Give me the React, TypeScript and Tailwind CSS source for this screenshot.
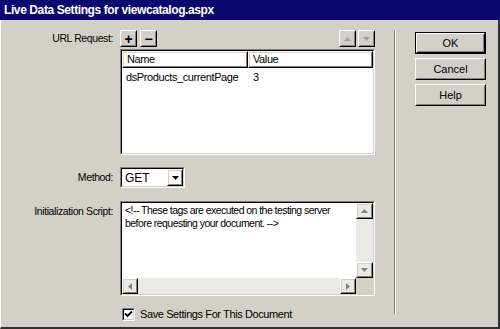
import { ReactNode } from "react";

const face = "font-['Liberation_Sans',Arial,sans-serif]";

// classic raised 3D edge
function Raised({ children, className = "" }: { children?: ReactNode; className?: string }) {
  return (
    <div className={`border border-t-white border-l-white border-b-black border-r-black ${className}`}>
      <div className="flex h-full w-full items-center justify-center border border-t-[#d4d0c8] border-l-[#d4d0c8] border-b-[#808080] border-r-[#808080]">
        {children}
      </div>
    </div>
  );
}

// classic sunken 3D edge
function Sunken({ children, className = "" }: { children?: ReactNode; className?: string }) {
  return (
    <div className={`border border-t-[#808080] border-l-[#808080] border-b-white border-r-white ${className}`}>
      <div className="flex h-full w-full flex-col border border-t-black border-l-black border-b-[#d4d0c8] border-r-[#d4d0c8] bg-white">
        {children}
      </div>
    </div>
  );
}

function Tri({ dir, color = "#808080" }: { dir: "up" | "down" | "left" | "right"; color?: string }) {
  const pts = {
    up: "0,4 7,4 3.5,0",
    down: "0,0 7,0 3.5,4",
    left: "4,0 4,7 0,3.5",
    right: "0,0 0,7 4,3.5",
  }[dir];
  const vertical = dir === "up" || dir === "down";
  return (
    <svg width={vertical ? 7 : 4} height={vertical ? 4 : 7} viewBox={vertical ? "0 0 7 4" : "0 0 4 7"}>
      <polygon points={pts} fill={color} />
    </svg>
  );
}

function DialogButton({ label, isDefault }: { label: string; isDefault?: boolean }) {
  return (
    <div className={`h-[22px] w-[71px] ${isDefault ? "border border-black" : ""}`}>
      <Raised className="h-full w-full">
        <span className="text-[11px] text-black">{label}</span>
      </Raised>
    </div>
  );
}

export default function App() {
  return (
    <div className={`flex h-[329px] w-[500px] flex-col bg-[#d4d0c8] ${face} text-black`}>
      {/* title bar */}
      <div className="flex h-[20px] items-center bg-[#08086e] pl-[4px]">
        <span className="text-[12px] font-bold tracking-[-0.4px] text-white">
          Live Data Settings for viewcatalog.aspx
        </span>
      </div>

      <div className="flex flex-1 border-b-2 border-r-2 border-b-[#303030] border-r-[#303030] border-l border-l-white">
        {/* form */}
        <div className="flex w-[393px] flex-col pt-[10px] text-[10.5px] tracking-[-0.4px]">
          <div className="flex items-center">
            <div className="w-[119px] pr-[7px] text-right">URL Request:</div>
            <div className="flex gap-[3px]">
              <Raised className="h-[17px] w-[17px]">
                <span className="text-[14px] font-bold leading-none">+</span>
              </Raised>
              <Raised className="h-[17px] w-[17px]">
                <span className="text-[14px] font-bold leading-none">−</span>
              </Raised>
            </div>
            <div className="ml-auto mr-[19px] flex gap-[2px]">
              <Raised className="h-[17px] w-[17px]">
                <Tri dir="up" color="#a0a0a0" />
              </Raised>
              <Raised className="h-[17px] w-[17px]">
                <Tri dir="down" color="#a0a0a0" />
              </Raised>
            </div>
          </div>

          <div className="mt-[2px] flex">
            <div className="w-[119px]" />
            <Sunken className="h-[106px] w-[255px]">
              <div className="flex h-[17px] text-[11px]">
                <Raised className="h-full w-[126px]">
                  <span className="w-full pl-[3px]">Name</span>
                </Raised>
                <Raised className="h-full flex-1">
                  <span className="w-full pl-[3px]">Value</span>
                </Raised>
              </div>
              <div className="flex pt-[1px] text-[11px]">
                <div className="w-[126px] pl-[4px]">dsProducts_currentPage</div>
                <div className="pl-[5px]">3</div>
              </div>
            </Sunken>
          </div>

          <div className="mt-[12px] flex items-center">
            <div className="w-[119px] pr-[7px] text-right">Method:</div>
            <Sunken className="h-[21px] w-[65px]">
              <div className="flex h-full items-center">
                <span className="flex-1 pl-[3px] text-[12px] tracking-normal">GET</span>
                <Raised className="h-[17px] w-[16px]">
                  <Tri dir="down" color="#000" />
                </Raised>
              </div>
            </Sunken>
          </div>

          <div className="mt-[13px] flex">
            <div className="w-[119px] pr-[7px] pt-[3px] text-right">Initialization Script:</div>
            <Sunken className="h-[95px] w-[255px]">
              <div className="flex flex-1">
                <div className="flex-1 pl-[3px] pt-[1px] leading-[13px] tracking-[-0.55px]">
                  &lt;!-- These tags are executed on the testing server
                  <br />
                  before requesting your document. --&gt;
                </div>
                <div className="flex w-[17px] flex-col bg-[#ebe9e4]">
                  <Raised className="h-[16px] w-[17px]">
                    <Tri dir="up" />
                  </Raised>
                  <div className="flex-1" />
                  <Raised className="h-[16px] w-[17px]">
                    <Tri dir="down" />
                  </Raised>
                </div>
              </div>
              <div className="flex h-[16px]">
                <div className="flex flex-1 bg-[#ebe9e4]">
                  <Raised className="h-[16px] w-[16px]">
                    <Tri dir="left" />
                  </Raised>
                  <div className="flex-1" />
                  <Raised className="h-[16px] w-[16px]">
                    <Tri dir="right" />
                  </Raised>
                </div>
                <div className="w-[17px] bg-[#d4d0c8]" />
              </div>
            </Sunken>
          </div>

          <div className="mt-[10px] flex items-center">
            <div className="w-[121px]" />
            <Sunken className="h-[13px] w-[13px]">
              <svg width="9" height="9" viewBox="0 0 9 9">
                <path d="M1 3.5 L3.5 6 L8 1.5" stroke="#000" strokeWidth="1.8" fill="none" />
              </svg>
            </Sunken>
            <span className="pl-[5px] text-[11px] tracking-[-0.4px]">Save Settings For This Document</span>
          </div>
        </div>

        {/* separator */}
        <div className="mb-[12px] mt-[10px] flex">
          <div className="w-px bg-[#808080]" />
          <div className="w-px bg-white" />
        </div>

        {/* buttons */}
        <div className="flex flex-col gap-[4px] pl-[19px] pt-[12px]">
          <DialogButton label="OK" isDefault />
          <DialogButton label="Cancel" />
          <DialogButton label="Help" />
        </div>
      </div>
    </div>
  );
}
